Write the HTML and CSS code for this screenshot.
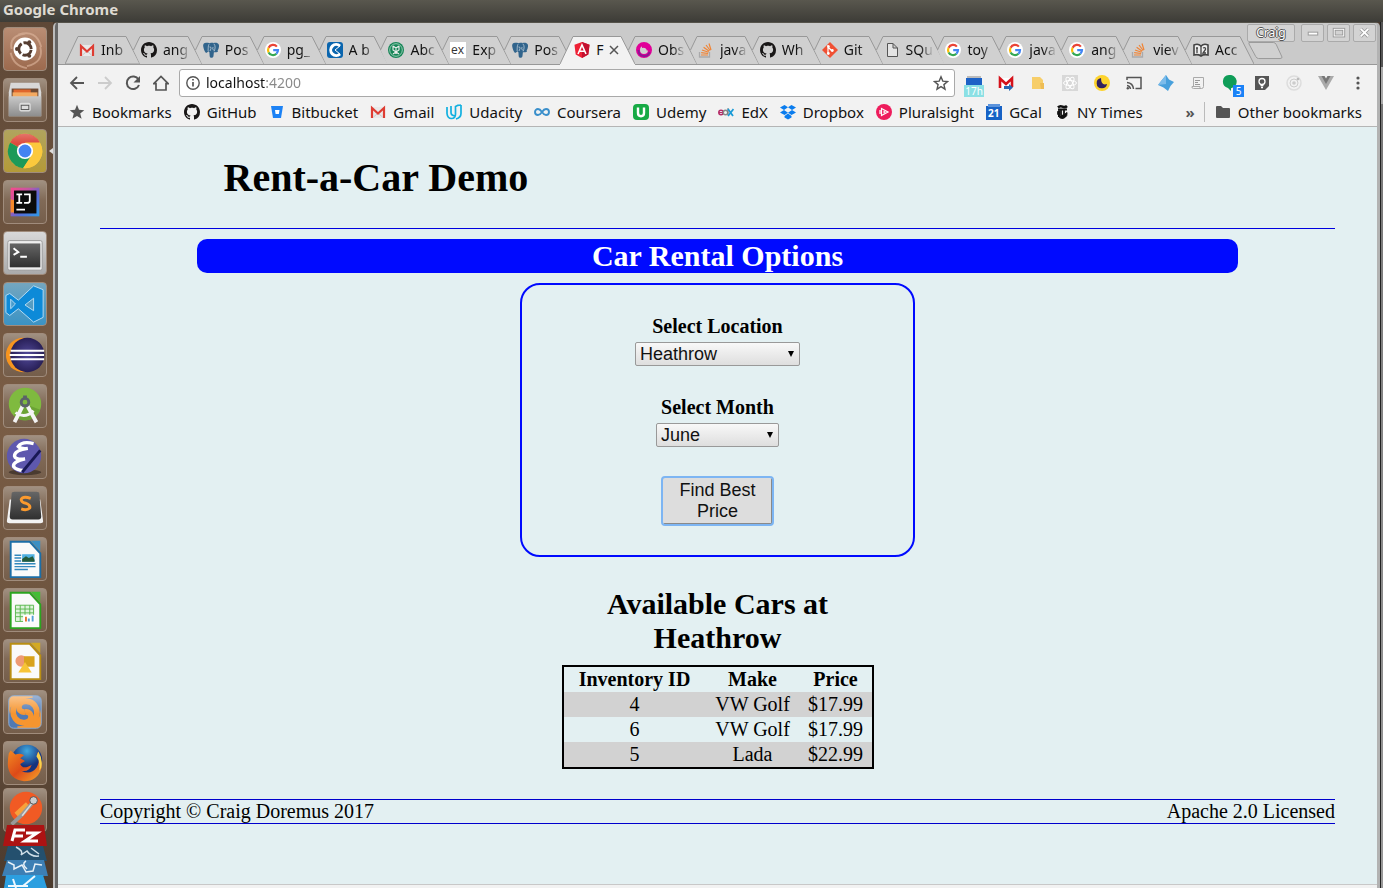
FILE: index.html
```html
<!DOCTYPE html>
<html lang="en">
<head>
<meta charset="utf-8">
<title>Rent-a-Car Demo</title>
<link rel="stylesheet" href="styles.css">
</head>
<body>
<svg class="defs" aria-hidden="true">
  <defs>
    <linearGradient id="gloss" x1="0" y1="0" x2="0" y2="1"><stop offset="0" stop-color="#fff" stop-opacity=".45"/><stop offset=".55" stop-color="#fff" stop-opacity="0"/></linearGradient>
    <linearGradient id="metal" x1="0" y1="0" x2="0" y2="1"><stop offset="0" stop-color="#c9c9c9"/><stop offset="1" stop-color="#8d8d8d"/></linearGradient>
    <linearGradient id="dark" x1="0" y1="0" x2="0" y2="1"><stop offset="0" stop-color="#666"/><stop offset="1" stop-color="#303030"/></linearGradient>
    <linearGradient id="rainbow" x1="0" y1="0" x2="1" y2="1"><stop offset="0" stop-color="#f94a8a"/><stop offset=".35" stop-color="#c255a5"/><stop offset=".6" stop-color="#5a6ad8"/><stop offset="1" stop-color="#2d9be8"/></linearGradient>
    <linearGradient id="fire" x1="0" y1="0" x2="1" y2="1"><stop offset="0" stop-color="#f28a22"/><stop offset=".5" stop-color="#dd4a18"/><stop offset="1" stop-color="#f7a72b"/></linearGradient>
    <radialGradient id="purple"><stop offset="0" stop-color="#524a9a"/><stop offset="1" stop-color="#281f56"/></radialGradient>
    <radialGradient id="globe" cx=".5" cy=".2"><stop offset="0" stop-color="#3fa9e0"/><stop offset="1" stop-color="#17337d"/></radialGradient>
    <clipPath id="rounded"><rect x="5" y="5" width="34" height="34" rx="5"/></clipPath>
  </defs>
  <symbol id="gmail" viewBox="0 0 16 16"><path d="M1 3h14v11H1z" fill="#e9e9e9"/><path d="M2 14V4l6 5.500L14 4v10" fill="none" stroke="#de3d33" stroke-width="2.200"/><path d="M3.500 13l3.500-3M12.500 13L9 10" stroke="#c9c9c9" fill="none"/></symbol>
  <symbol id="github" viewBox="0 0 16 16"><path fill="#191717" d="M8 0C3.580 0 0 3.580 0 8c0 3.540 2.290 6.530 5.470 7.590.4.07.55-.17.55-.38 0-.19-.01-.82-.01-1.490-2.010.37-2.530-.49-2.690-.94-.09-.23-.48-.94-.82-1.130-.28-.15-.68-.52-.01-.53.63-.01 1.080.58 1.230.82.72 1.210 1.870.87 2.330.66.07-.52.28-.87.51-1.070-1.780-.2-3.640-.89-3.640-3.950 0-.87.31-1.590.82-2.150-.08-.2-.36-1.020.08-2.120 0 0 .67-.21 2.200.82.64-.18 1.320-.27 2-.27s1.360.09 2 .27c1.530-1.040 2.200-.82 2.200-.82.44 1.100.16 1.920.08 2.120.51.56.82 1.270.82 2.150 0 3.070-1.870 3.750-3.650 3.950.29.25.54.73.54 1.480 0 1.070-.01 1.930-.01 2.200 0 .21.15.46.55.38A8 8 0 0 0 16 8c0-4.420-3.580-8-8-8z"/></symbol>
  <symbol id="postgres" viewBox="0 0 16 16"><path fill="#31648c" d="M3.500.7C.8.5-.1 2.300.2 4.300.7 7 1.500 9.700 2.800 10.700c1 .5 1.700-.6 2.600-1.400l1 .9.300 4c.3 1.900 3 2 3.700.3l.5-4.200 2.600-.1c1.300-.3 1.900-.8 1-1.200C16 6.500 16.500 3.500 15.500 2 14.300.5 12 .6 10.800 1 9.500.6 8 .6 6.800 1.200 5.600.8 4.500.7 3.500.7z"/><path d="M6 2.200C5 4 5.300 6 5.100 9M10.900 1.800c1.800 2.200 1.300 4.700.3 7.500M6.500 5q1.800-.5 1.500 1.500L7 9M10 5q-1 2 .8 3.500" fill="none" stroke="#cbd8e2" stroke-width=".7"/></symbol>
  <symbol id="google" viewBox="0 0 16 16"><circle cx="8" cy="8" r="8" fill="#fff"/><g fill="none" stroke-width="2.200"><path d="M11.900 4.600A5 5 0 0 0 3.600 5.700" stroke="#ea4335"/><path d="M3.600 5.700a5 5 0 0 0 0 4.700" stroke="#fbbc05"/><path d="M3.600 10.400a5 5 0 0 0 7.800 1.400" stroke="#34a853"/><path d="M11.400 11.800A5 5 0 0 0 13 8.100H8.200" stroke="#4285f4"/></g></symbol>
  <symbol id="overflow" viewBox="0 0 16 16"><path d="M1.500 10v5h10v-5" fill="none" stroke="#a9a9ab" stroke-width="1.300"/><path d="M3 13h7M3.200 10.700l6.900.8M4 8l6.500 2.300M5.600 5.300l5.600 4M8 3l4.200 5.500M11 1.500l2 6.500" stroke="#f08435" stroke-width="1.200"/></symbol>
  <symbol id="tab" viewBox="0 0 75 28"><path d="M6.500 14L13 .5H61L75 28H13z" fill="#d0d0d0"/><path d="M6.500 14L13 .5H61L75 28" fill="none" stroke="#989898"/></symbol>
  <symbol id="tab-first" viewBox="0 0 75 28"><path d="M0 28L13 .5H61L75 28z" fill="#d0d0d0" stroke="#989898"/></symbol>
  <symbol id="tab-active" viewBox="0 0 75 29"><path d="M0 28L13 .5H61L75 28v1H0z" fill="#f2f2f2"/><path d="M0 28L13 .5H61L75 28" fill="none" stroke="#989898"/></symbol>
</svg>

<header class="panel">Google Chrome</header>
<div class="desktop">
  <nav class="launcher" aria-label="Launcher">
    <button class="tile ubuntu" aria-label="Dash"><svg viewBox="0 0 44 44"><path d="M8 22Q5 8 22 6M38 20Q42 36 24 40M7 26Q10 40 24 42M15 7Q34 1 39 20" fill="none" stroke="#e0b79f" stroke-width="2" opacity=".6"/><circle cx="22" cy="22" r="12" fill="#fff"/><circle cx="22" cy="22" r="6.500" fill="none" stroke="#553d31" stroke-width="3" stroke-dasharray="11.600 2" stroke-dashoffset="-1"/><g fill="#553d31"><circle cx="13.500" cy="22" r="2"/><circle cx="26.500" cy="14.800" r="2"/><circle cx="26.500" cy="29.200" r="2"/></g></svg></button>
    <button class="tile" aria-label="Files"><svg viewBox="0 0 44 44"><path d="M7 4h30l2 10v25H5V14z" fill="#d8d8d8"/><path d="M8 10h28v10H8z" fill="#6e4a34"/><path d="M10 11h18v7H10z" fill="#e0662d"/><path d="M9 14h26v6H9z" fill="#f4a960"/><path d="M5 18h34v21H5z" fill="url(#metal)"/><rect x="16" y="25" width="12" height="9" rx="2" fill="#ddd"/><rect x="18" y="27.500" width="8" height="4.500" fill="#ddd" stroke="#555"/></svg></button>
    <button class="tile gold" aria-label="Chrome"><svg viewBox="0 0 44 44"><circle cx="22" cy="22" r="18" fill="#fbc93d"/><path d="M22 22L6.400 13A18 18 0 0 1 37.600 13z" fill="#dc4c3f"/><path d="M22 22L6.400 13A18 18 0 0 0 20 40l9-13z" fill="#1c9a59"/><path d="M22 13h15.600A18 18 0 0 1 20 40l9-14z" fill="#fbc93d"/><circle cx="22" cy="22" r="8.500" fill="#fff"/><circle cx="22" cy="22" r="6.700" fill="#4383f2"/><path d="M4 22a18 18 0 0 1 36 0z" fill="url(#gloss)" opacity=".5"/></svg><i class="mark"></i></button>
    <button class="tile" aria-label="IntelliJ"><svg viewBox="0 0 44 44"><path d="M7 7h30v30H7z" fill="url(#rainbow)"/><path d="M7 19l6 2v12H7z" fill="#f5892a"/><path d="M10.500 10h23.500v24H10.500z" fill="#0b0b0b"/><path d="M13 14h6M16 14v9M13 23h6M21 14h6v7q0 2-3 2h-3M13 30h9" fill="none" stroke="#fff" stroke-width="1.900"/></svg></button>
    <button class="tile silver" aria-label="Terminal"><svg viewBox="0 0 44 44"><rect x="4" y="9" width="36" height="31" rx="2" fill="#eee" stroke="#999"/><rect x="6" y="12" width="32" height="25" fill="url(#dark)"/><path d="M10 17l5 4-5 3M17 26h7" fill="none" stroke="#fff" stroke-width="2"/></svg></button>
    <button class="tile blue" aria-label="Visual Studio Code"><svg viewBox="0 0 44 44"><path d="M31 3l10 4v29l-10 5-16-14-9 7-4-3V13l4-2 9 7zm0 13l-9 7 9 6z" fill="#0d8ad8" stroke="#b8ddf4"/><path d="M7 17v10l5-5z" fill="#4a9ccc" stroke="#b8ddf4"/></svg></button>
    <button class="tile" aria-label="Eclipse"><svg viewBox="0 0 44 44"><circle cx="20" cy="22" r="18" fill="#f7941e"/><circle cx="24.500" cy="22" r="18" fill="url(#purple)"/><path d="M7 17.500h35M6 22h36M7 26.500h35" stroke="#fff" stroke-width="2.200"/></svg></button>
    <button class="tile" aria-label="Android Studio"><svg viewBox="0 0 44 44"><circle cx="22" cy="20" r="17" fill="#7fba3f"/><path d="M22 20L10 32a17 17 0 0 0 28-6z" fill="#6ba334"/><path d="M20 21L11 39M24 21l10 18" stroke="#f4f4f4" stroke-width="4"/><path d="M12 29q10 7 19-2" fill="none" stroke="#f4f4f4" stroke-width="3"/><circle cx="22" cy="18" r="4" fill="none" stroke="#5b6268" stroke-width="3"/><path d="M22 11v4" stroke="#5b6268" stroke-width="4"/></svg></button>
    <button class="tile" aria-label="Emacs"><svg viewBox="0 0 44 44"><ellipse cx="22" cy="38" rx="17" ry="3" fill="#4a3b30"/><circle cx="21" cy="21" r="18" fill="#5e58ae"/><path d="M31 8q-12-3-16 3 3 3 10 2-14 2-14 8 1 4 11 3-13 3-12 8 3 4 10 4" fill="none" stroke="#fff" stroke-width="3.500"/><path d="M38 15L19 38" stroke="#191955" stroke-width="3"/></svg></button>
    <button class="tile" aria-label="Sublime Text"><svg viewBox="0 0 44 44"><path d="M6 13L3 36q0 2 3 2h32q3 0 3-2l-3-23z" fill="#f3f3f3"/><path d="M8 7q0-2 3-2h23q3 0 3 2l2 24q0 3-3 3H9q-3 0-3-3z" fill="url(#dark)"/><path d="M28 12q-8-3-10 1 0 3 5 4 5 2 4 5-3 3-9 1" fill="none" stroke="#fb9a2e" stroke-width="3"/></svg></button>
    <button class="tile" aria-label="Writer"><svg viewBox="0 0 44 44"><path d="M7 4h20l11 12v25H7z" fill="#fafafa" stroke="#1c6ea7" stroke-width="2"/><path d="M28 3h10v11z" fill="#3c8fc3"/><path d="M11 18h7M11 21h7M11 24h7M11 27h22M11 30h22M11 33h14" stroke="#3288bd" stroke-width="1.500"/><path d="M19 17h13v8H19z" fill="#4fb0e2"/><path d="M19 25v-3l4-3 3 2 4-2 2 4v2z" fill="#255b3b"/></svg></button>
    <button class="tile" aria-label="Calc"><svg viewBox="0 0 44 44"><path d="M7 4h20l11 12v25H7z" fill="#fafafa" stroke="#2ba41f" stroke-width="2"/><path d="M28 3h10v11z" fill="#43bd35"/><path d="M12 17h19v17H12zM12 21h19M12 25h19M12 29h19M17 17v17M22 17v17M27 17v17" fill="#dff3dc" stroke="#5ab850"/><path d="M20 27h13v8H20z" fill="#fff"/><path d="M23 29v5" stroke="#e6732e" stroke-width="2"/><path d="M26 31v3M30 28v6" stroke="#559fd3" stroke-width="2"/></svg></button>
    <button class="tile" aria-label="Draw"><svg viewBox="0 0 44 44"><path d="M7 4h20l11 12v25H7z" fill="#fafafa" stroke="#b98e13" stroke-width="2"/><path d="M28 3h10v11z" fill="#d3aa24"/><circle cx="18" cy="22" r="6" fill="#ee9a74"/><path d="M21 17h11v11H21z" fill="#d9a21c"/><path d="M22 23l7 11H15z" fill="#f7c437"/></svg></button>
    <button class="tile" aria-label="Swirl"><svg viewBox="0 0 44 44"><g clip-path="url(#rounded)"><path d="M5 5h34v34H5z" fill="#5079b3"/><g fill="none" stroke="#f6952f" stroke-width="6"><path d="M22 22C14 23 13 12 22 11c9-1 14 7 12 15-2 9-10 14-20 14"/><path d="M22 22c8-1 9 10 0 11C13 34 8 26 10 18 12 9 20 4 30 4"/></g><path d="M5 5h12L7 17l-2 9zM39 39H27l10-12 2-9z" fill="#f6952f"/></g><rect x="5" y="5" width="34" height="34" rx="5" fill="url(#gloss)" stroke="#8fb0d8"/></svg></button>
    <button class="tile" aria-label="Firefox"><svg viewBox="0 0 44 44"><circle cx="24" cy="19" r="16" fill="url(#globe)"/><path d="M5 12l2-3 5 4q6-2 9 1l-4 3 5 3-5 3q2 5 8 3l4-2q-3 8-11 6 10 5 16-3 5-8 0-17 7 8 5 18-4 13-18 13Q5 39 4 24q0-7 1-12z" fill="url(#fire)"/><path d="M36 10q5 8 3 17l-2 3q1-10-3-15z" fill="#f9d24b"/></svg></button>
    <button class="tile short" aria-label="Postman"><svg viewBox="0 0 44 44"><circle cx="23" cy="20" r="17" fill="#f15a24"/><path d="M13 27l12-11" stroke="#f7a13b" stroke-width="6"/><path d="M31 13L19 27 8 37" fill="none" stroke="#999" stroke-width="4"/><path d="M30 14L19 28" stroke="#ddd" stroke-width="1.500"/><circle cx="31" cy="12" r="4" fill="#ccc" stroke="#555"/></svg></button>
    <svg class="pile" viewBox="0 0 53 63"><path d="M7 0h37l3 21H3z" fill="#ac1313"/><path d="M12 16l3-11h10M14 11h9M26 8h11L25 16h13" fill="none" stroke="#fff" stroke-width="3"/><path d="M8 21h35l4 15H4z" fill="#24506e"/><path d="M16 22q8 4 5 8l6-4q4 6 12 5M31 23l8 6" fill="none" stroke="#cfdfe8" stroke-width="1.500"/><path d="M7 35h37l4 16H2z" fill="#3d7fb4"/><path d="M8 37l6 3v4l8-4 4 7 7-1 2-7 7 1M26 36q-5 3 1 8" fill="none" stroke="#e7f0f7" stroke-width="1.500"/><path d="M6 50h37l4 13H4z" fill="#2c9fe0"/><path d="M13 54l3 9M35 51L23 61M8 61h20" fill="none" stroke="#eef8ff" stroke-width="2"/></svg>
  </nav>

  <div class="window">
    <div class="strip">
      <div class="tabs" role="tablist">
        <div class="tab" role="tab"><svg class="shape"><use href="#tab-first"/></svg><svg class="icon"><use href="#gmail"/></svg><span>Inb</span></div>
        <div class="tab" role="tab"><svg class="shape"><use href="#tab"/></svg><svg class="icon"><use href="#github"/></svg><span>ang</span></div>
        <div class="tab" role="tab"><svg class="shape"><use href="#tab"/></svg><svg class="icon"><use href="#postgres"/></svg><span>Pos</span></div>
        <div class="tab" role="tab"><svg class="shape"><use href="#tab"/></svg><svg class="icon"><use href="#google"/></svg><span>pg_</span></div>
        <div class="tab" role="tab"><svg class="shape"><use href="#tab"/></svg><svg class="icon" viewBox="0 0 16 16"><rect width="16" height="16" rx="3" fill="#0a65ae"/><path d="M13 4A5.500 5.500 0 1 0 13 12" fill="none" stroke="#fff" stroke-width="3"/><path d="M13 4L8 8l5 4" fill="#0a65ae" stroke="#fff" stroke-width="1"/></svg><span>A b</span></div>
        <div class="tab" role="tab"><svg class="shape"><use href="#tab"/></svg><svg class="icon" viewBox="0 0 16 16"><circle cx="8" cy="8" r="8" fill="#158556"/><circle cx="8" cy="8" r="6.300" fill="none" stroke="#cfe6db" stroke-width=".7"/><path d="M5 4l3 2 3-2M5 4v4l6 4M11 4v4l-6 4M8 6v6" fill="none" stroke="#eee" stroke-width="1.100"/></svg><span>Abc</span></div>
        <div class="tab" role="tab"><svg class="shape"><use href="#tab"/></svg><svg class="icon" viewBox="0 0 16 16"><path d="M0 0h16v16H0z" fill="#fff"/><text x="1" y="12" class="ex">ex</text></svg><span>Exp</span></div>
        <div class="tab" role="tab"><svg class="shape"><use href="#tab"/></svg><svg class="icon"><use href="#postgres"/></svg><span>Pos</span></div>
        <div class="tab active" role="tab" aria-selected="true"><svg class="shape"><use href="#tab-active"/></svg><svg class="icon" viewBox="0 0 16 16"><path d="M8 0l7.500 2.700-1.200 9.800L8 16l-6.300-3.500L.5 2.700z" fill="#ee2035"/><path d="M8 0v16l6.300-3.500 1.200-9.800z" fill="#c3102f"/><path d="M4 12l4-9 4 9M5.600 9.300h4.800" fill="none" stroke="#fff" stroke-width="1.600"/></svg><span>F</span><button class="close" aria-label="Close tab"><svg viewBox="0 0 10 10"><path d="M1 1l8 8M9 1L1 9" stroke="#555" stroke-width="1.500"/></svg></button></div>
        <div class="tab" role="tab"><svg class="shape"><use href="#tab"/></svg><svg class="icon" viewBox="0 0 16 16"><circle cx="8" cy="8" r="6" fill="#d0d0d0" stroke="#e10098" stroke-width="4"/><path d="M2.500 8q0 6 6 6 4 0 5-4" fill="none" stroke="#8b1792" stroke-width="2"/><path d="M6 3q6-1 7 4l-2 2q-1-4-5-3z" fill="#e10098"/></svg><span>Obs</span></div>
        <div class="tab" role="tab"><svg class="shape"><use href="#tab"/></svg><svg class="icon"><use href="#overflow"/></svg><span>java</span></div>
        <div class="tab" role="tab"><svg class="shape"><use href="#tab"/></svg><svg class="icon"><use href="#github"/></svg><span>Wh</span></div>
        <div class="tab" role="tab"><svg class="shape"><use href="#tab"/></svg><svg class="icon" viewBox="0 0 16 16"><path d="M8 0l8 8-8 8-8-8z" fill="#f05033"/><path d="M6 3v9M6 5l4 4" stroke="#fff" fill="none" stroke-width="1.200"/><g fill="#fff"><circle cx="6.500" cy="4.500" r="1.300"/><circle cx="6.300" cy="11.500" r="1.400"/><circle cx="10.300" cy="8.500" r="1.400"/></g></svg><span>Git</span></div>
        <div class="tab" role="tab"><svg class="shape"><use href="#tab"/></svg><svg class="icon" viewBox="0 0 16 16"><path d="M3.500 1.500H9L13.500 6v8.500h-10zM9 1.500V6h4.500" fill="#e4e4e4" stroke="#555"/></svg><span>SQu</span></div>
        <div class="tab" role="tab"><svg class="shape"><use href="#tab"/></svg><svg class="icon"><use href="#google"/></svg><span>toy</span></div>
        <div class="tab" role="tab"><svg class="shape"><use href="#tab"/></svg><svg class="icon"><use href="#google"/></svg><span>java</span></div>
        <div class="tab" role="tab"><svg class="shape"><use href="#tab"/></svg><svg class="icon"><use href="#google"/></svg><span>ang</span></div>
        <div class="tab" role="tab"><svg class="shape"><use href="#tab"/></svg><svg class="icon"><use href="#overflow"/></svg><span>viev</span></div>
        <div class="tab" role="tab"><svg class="shape"><use href="#tab"/></svg><svg class="icon" viewBox="0 0 16 16"><path d="M1 3q4-2 7 1 3-3 7-1v10q-4-1-7 1-3-2-7-1z" fill="#eee" stroke="#444" stroke-width="1.600"/><path d="M8 4v10M4 6v5M3 6h2M10 6q3-1 2.500 1.500L10 11h3" fill="none" stroke="#444" stroke-width="1.300"/></svg><span>Acc</span></div>
      </div>
      <div class="corner">
        <div class="controls">
          <button class="user">Craig</button>
          <button aria-label="Minimize"><svg viewBox="0 0 22 16"><rect x="6.500" y="7.500" width="10" height="3" fill="#fff" stroke="#999"/></svg></button>
          <button aria-label="Maximize"><svg viewBox="0 0 22 16"><rect x="6.500" y="4.500" width="10" height="7" fill="none" stroke="#999" stroke-width="3"/><rect x="6.500" y="4.500" width="10" height="7" fill="none" stroke="#fff"/></svg></button>
          <button aria-label="Close"><svg viewBox="0 0 22 16"><path d="M7 4l8 8M15 4l-8 8" stroke="#999" stroke-width="3.500"/><path d="M7 4l8 8M15 4l-8 8" stroke="#fff" stroke-width="2"/></svg></button>
        </div>
        <button class="newtab" aria-label="New tab"><svg viewBox="0 0 36 18"><path d="M1 .5h25q2 0 3 2l6 13q0 1.500-2 1.500H11q-2 0-3-2L1 2z" fill="#d0d0d0" stroke="#999"/></svg></button>
      </div>
    </div>

    <div class="toolbar">
      <button class="nav" aria-label="Back"><svg viewBox="0 0 16 16"><path d="M15 8H2M8 2L2 8l6 6" fill="none" stroke="#555" stroke-width="1.800"/></svg></button>
      <button class="nav" aria-label="Forward"><svg viewBox="0 0 16 16"><path d="M1 8h13M8 2l6 6-6 6" fill="none" stroke="#ccc" stroke-width="1.800"/></svg></button>
      <button class="nav" aria-label="Reload"><svg viewBox="0 0 16 16"><path d="M13.500 4.500A6.300 6.300 0 1 0 14 10" fill="none" stroke="#555" stroke-width="2"/><path d="M15 1v6.500H8.500z" fill="#555"/></svg></button>
      <button class="nav" aria-label="Home"><svg viewBox="0 0 16 16"><path d="M.8 8.700L8 1.500l7.200 7.200H13V15H3V8.700z" fill="none" stroke="#555" stroke-width="1.700"/></svg></button>
      <div class="omnibox">
        <svg class="icon" viewBox="0 0 16 16"><circle cx="8" cy="8" r="6.200" fill="none" stroke="#555" stroke-width="1.400"/><path d="M8 7v4.500M8 4v1.600" stroke="#555" stroke-width="1.700"/></svg>
        <input type="text" value="localhost:4200" aria-label="Address">
        <button class="nav" aria-label="Bookmark this page"><svg viewBox="0 0 16 16"><path d="M8 1.800l1.800 4.300 4.700.4-3.600 3.100 1.100 4.600L8 11.700l-4 2.500 1.100-4.600L1.500 6.500l4.700-.4z" fill="none" stroke="#555" stroke-width="1.400"/></svg></button>
      </div>
      <div class="extensions">
        <button aria-label="Calendar"><svg viewBox="0 0 20 16"><path d="M3 1h14v2H3z" fill="#bbb"/><path d="M2 3h16v9H2z" fill="#1d62c6"/></svg><b class="badge hours">17h</b></button>
        <button aria-label="Mail checker"><svg viewBox="0 0 16 16"><path d="M1 3h14v10H1z" fill="#fff"/><path d="M2 13V3.500L8 9l6-5.500V12" fill="none" stroke="#d5121b" stroke-width="2.600"/><path d="M6 11h5V9l4 3.500-4 3.500v-2H6z" fill="#2867b2"/></svg></button>
        <button aria-label="Notes"><svg viewBox="0 0 16 16"><path d="M2 2h8l3 3v9H2z" fill="#f7ce69"/><path d="M10 8h4v6h-3z" fill="#eebd55"/></svg></button>
        <button aria-label="React"><svg viewBox="0 0 16 16"><path d="M0 0h16v16H0z" fill="#d8d8d8"/><g fill="none" stroke="#fff"><ellipse cx="8" cy="8" rx="6.500" ry="2.500"/><ellipse cx="8" cy="8" rx="6.500" ry="2.500" transform="rotate(60 8 8)"/><ellipse cx="8" cy="8" rx="6.500" ry="2.500" transform="rotate(120 8 8)"/></g></svg></button>
        <button aria-label="Moon"><svg viewBox="0 0 16 16"><circle cx="8" cy="8" r="8" fill="#fdd32c"/><path d="M7 3a5.200 5.200 0 1 0 6 6q-6 2-6-6z" fill="#33215f"/></svg></button>
        <button aria-label="Cast"><svg viewBox="0 0 16 16"><path d="M1 5V2.500h14v11H9.500M1 7.500q6 .5 6.500 6.500M1 10.500q3 .3 3.500 3.500" fill="none" stroke="#555" stroke-width="1.500"/><circle cx="1.800" cy="13.300" r="1.200" fill="#555"/></svg></button>
        <button aria-label="Star"><svg viewBox="0 0 16 16"><path d="M8 0l3 4.500 5 2.500-3.500 4L10 16l-4.500-3.500L0 10l3.500-4.500z" fill="#48a0dc"/><path d="M8 0v9l-8 1 3.500-4.500z" fill="#7cbceb"/></svg></button>
        <button aria-label="Scripts"><svg viewBox="0 0 16 16"><path d="M3.500 2.500h10v9q0 2-2 2h-8q-2 0-1.500-2h8v2M3.500 2.500v9" fill="none" stroke="#aaa"/><path d="M5 5.500h5M5 7.500h3M5 9.500h5" stroke="#999"/></svg></button>
        <button aria-label="Hangouts"><svg viewBox="0 0 16 16"><path d="M7 0a6.600 6.600 0 0 1 2 13.200V16l-3-3A6.600 6.600 0 0 1 7 0z" fill="#0f9d58"/></svg><b class="badge count">5</b></button>
        <button aria-label="Ideas"><svg viewBox="0 0 16 16"><path d="M1 1h14v10l-4 4H1z" fill="#555"/><circle cx="8" cy="6.500" r="3" fill="none" stroke="#fff" stroke-width="1.300"/><path d="M6.500 10.500h3M7 12.500h2" stroke="#fff" stroke-width="1.500"/></svg></button>
        <button aria-label="Orbit"><svg viewBox="0 0 16 16"><circle cx="8" cy="8" r="7" fill="none" stroke="#ddd" stroke-width="1.500"/><circle cx="8" cy="8" r="4" fill="none" stroke="#ccc"/><circle cx="8" cy="8" r="1.800" fill="#ccc"/><circle cx="12" cy="4" r="1.300" fill="#bbb"/></svg></button>
        <button aria-label="Vue"><svg viewBox="0 0 16 16"><path d="M0 1h6l2 4 2-4h6L8 15z" fill="#aaa"/><path d="M3.500 1h3L8 3.500 9.500 1h3L8 9z" fill="#777"/></svg></button>
        <button aria-label="Menu"><svg viewBox="0 0 16 16"><g fill="#555"><circle cx="8" cy="3" r="1.600"/><circle cx="8" cy="8" r="1.600"/><circle cx="8" cy="13" r="1.600"/></g></svg></button>
      </div>
    </div>

    <nav class="bookmarks" aria-label="Bookmarks">
      <a href="#"><svg class="icon" viewBox="0 0 16 16"><path d="M8 .8l2 5 5.300.4-4.100 3.400 1.400 5.200L8 12l-4.600 2.800 1.400-5.200L.7 6.200 6 5.800z" fill="#555"/></svg>Bookmarks</a>
      <a href="#"><svg class="icon"><use href="#github"/></svg>GitHub</a>
      <a href="#"><svg class="icon" viewBox="0 0 16 16"><path d="M2 2h12l-2 12H4z" fill="#1c82f5"/><path d="M6 6h4.500l-.6 4H6.600z" fill="#fff"/></svg>Bitbucket</a>
      <a href="#"><svg class="icon"><use href="#gmail"/></svg>Gmail</a>
      <a href="#"><svg class="icon" viewBox="0 0 16 16"><path d="M1 3v6.500q.5 5 4.500 5t4-4.500V2.500l3-1.500M15 1v8.500q0 4-5 5.500M5 2v6.500q0 3 4 3.500M11.500 1.500L15 1" fill="none" stroke="#12b0e0" stroke-width="1.700"/></svg>Udacity</a>
      <a href="#"><svg class="icon" viewBox="0 0 16 16"><path d="M8 8Q6 5 4 5a3 3 0 0 0 0 6q2 0 4-3t4-3a3 3 0 0 1 0 6q-2 0-4-3z" fill="none" stroke="#3a8fcb" stroke-width="1.900"/></svg>Coursera</a>
      <a href="#"><svg class="icon" viewBox="0 0 16 16"><rect width="16" height="16" rx="4" fill="#17aa45"/><path d="M5 3.500V9q0 3.200 3 3.200T11 9V3.500" fill="none" stroke="#fff" stroke-width="2.400"/></svg>Udemy</a>
      <a href="#"><svg class="icon" viewBox="0 0 16 16"><circle cx="3" cy="8.500" r="2.200" fill="none" stroke="#b52a67" stroke-width="1.500"/><path d="M1 8.500h4" stroke="#b52a67"/><circle cx="7.500" cy="8.500" r="2.200" fill="none" stroke="#888" stroke-width="1.400"/><path d="M10 4v7" stroke="#777"/><path d="M10 5l5 7M15.500 5L10 12" stroke="#1a9bd7" stroke-width="1.800"/></svg>EdX</a>
      <a href="#"><svg class="icon" viewBox="0 0 16 16"><path d="M4.500 1L8 3.300 4 6 0 3.600zM11.500 1L16 3.600 12 6 8 3.300zM0 8.500L4 6l4 2.700L4.500 11zM12 6l4 2.500-4.500 2.500L8 8.700zM8 9.600l3.500 2.400v1.400L8 15.500l-3.500-2.100V12z" fill="#0a7cee"/></svg>Dropbox</a>
      <a href="#"><svg class="icon" viewBox="0 0 16 16"><circle cx="8" cy="8" r="8" fill="#ee1c5c"/><path d="M5.500 4.500L12 8l-6.500 3.500zM4 6v4" fill="none" stroke="#fff" stroke-width="1.200"/><path d="M7.500 6.500L10 8 7.500 9.500z" fill="#fff"/></svg>Pluralsight</a>
      <a href="#"><svg class="icon" viewBox="0 0 16 16"><path d="M0 2h16v14H0z" fill="#1762c5"/><path d="M2 0h12v3H2z" fill="#5b93dc"/><text x="2" y="13" class="day">21</text></svg>GCal</a>
      <a href="#"><svg class="icon" viewBox="0 0 16 16"><path d="M4 3.500q2-2 4.500-.8T13 2" fill="none" stroke="#111" stroke-width="2.600"/><path d="M4 5.500h9M7 5.500v6M10 5v8" fill="none" stroke="#111" stroke-width="1.800"/><path d="M3.500 8.500q0-2 2-2v6q-2-1-2-4zM4 12q3 4 7 1.500 2.500-1.500 2-5l-2 1.500" fill="#111" stroke="#111"/></svg>NY Times</a>
      <button class="more" aria-label="More bookmarks">»</button>
      <a href="#" class="other"><svg class="icon" viewBox="0 0 16 16"><path d="M1 3q0-1 1-1h4l2 2h6q1 0 1 1v8q0 1-1 1H2q-1 0-1-1z" fill="#555"/></svg>Other bookmarks</a>
    </nav>

    <main class="page">
      <h1>Rent-a-Car Demo</h1>
      <section class="content">
        <h2 class="banner">Car Rental Options</h2>
        <form class="options">
          <label for="location">Select Location</label>
          <span class="select wide"><select id="location"><option>Heathrow</option></select></span>
          <label for="month">Select Month</label>
          <span class="select"><select id="month"><option>June</option></select></span>
          <button type="button" class="find">Find Best Price</button>
        </form>
        <section class="cars">
          <h2>Available Cars at Heathrow</h2>
          <table>
            <thead><tr><th class="id">Inventory ID</th><th class="make">Make</th><th>Price</th></tr></thead>
            <tbody>
              <tr><td>4</td><td>VW Golf</td><td>$17.99</td></tr>
              <tr><td>6</td><td>VW Golf</td><td>$17.99</td></tr>
              <tr><td>5</td><td>Lada</td><td>$22.99</td></tr>
            </tbody>
          </table>
        </section>
      </section>
      <footer><span>Copyright © Craig Doremus 2017</span><span>Apache 2.0 Licensed</span></footer>
    </main>
  </div>
  <div class="behind"></div>
</div>
</body>
</html>
```
FILE: styles.css
```css
* { box-sizing: border-box; }

body {
  margin: 0;
  height: 100vh;
  display: flex;
  flex-direction: column;
  overflow: hidden;
  background: #4a3a2e;
  color: #111;
  font: 14px/20px "Noto Sans", sans-serif;
}

button {
  margin: 0;
  padding: 0;
  border: 0;
  background: none;
  font: inherit;
  color: inherit;
}

svg { display: block; }
.defs { position: absolute; width: 0; height: 0; }
.icon { flex: none; width: 16px; height: 16px; }

.panel {
  flex: none;
  height: 22px;
  padding-left: 3px;
  background: linear-gradient(#59574e, #3d3c37);
  color: #dfdbd2;
  font-size: 15px;
  font-weight: bold;
  line-height: 18px;
}

.desktop { flex: 1; min-height: 0; display: flex; }

/* launcher */
.launcher {
  position: relative;
  flex: none;
  width: 53px;
  padding: 5px 0 0 3px;
  display: flex;
  flex-direction: column;
  gap: 7px;
  overflow: hidden;
  background: linear-gradient(#5e4837, #7a5d45 45%, #6d543f 70%, #4b3a2d);
}
.tile {
  position: relative;
  flex: none;
  width: 44px;
  height: 44px;
  border: 1px solid #a08c7c;
  border-radius: 4px;
  background: linear-gradient(#a09081, #816a57 45%, #755e4b);
}
.tile > svg { width: 42px; height: 42px; }
.ubuntu { background: linear-gradient(#b98d74, #9c6a4e); }
.gold { background: linear-gradient(#b0a45e, #b49a38); }
.silver { background: linear-gradient(#d8d8d8, #aaa); }
.blue { background: linear-gradient(#74a6bf, #3b93c4); }
.short { margin-top: -4px; }
.mark {
  position: absolute;
  right: -7px;
  top: 18px;
  border: 3px solid transparent;
  border-left: 0;
  border-right: 4px solid #ddd;
}
.launcher .pile {
  position: absolute;
  left: 0;
  bottom: 0;
  width: 53px;
  height: 63px;
}

/* browser window */
.window {
  flex: 1;
  min-width: 0;
  display: flex;
  flex-direction: column;
  border: solid #a6a6a6;
  border-width: 1px 3px 0 5px;
  border-left: 5px ridge #bbb;
  border-right-color: #b2b2b2;
  border-top-color: #55534b;
  border-radius: 5px 5px 0 0;
  background: #cacaca;
}
.behind {
  flex: none;
  width: 3px;
  border-left: 1px solid #222;
  background: linear-gradient(#555 45px, #aaa 45px, #aaa 82px, #777 82px, #999);
}

.strip {
  flex: none;
  display: flex;
  height: 42px;
  border-bottom: 1px solid #989898;
}
.tabs {
  flex: 1;
  min-width: 0;
  display: flex;
  align-items: flex-end;
  padding-left: 7px;
}
.tab {
  position: relative;
  flex: 1 1 0;
  min-width: 0;
  display: flex;
  align-items: center;
  gap: 6px;
  height: 28px;
  padding-left: 14px;
}
.shape {
  position: absolute;
  left: 0;
  top: 0;
  width: 75px;
  height: 28px;
  overflow: visible;
}
.active .shape { height: 29px; }
.tab .icon, .tab span, .close { position: relative; }
.tab span {
  white-space: nowrap;
  mask-image: linear-gradient(90deg, #000 14px, transparent 28px);
}
.tab.active { z-index: 2; }
.tab.active span { mask-image: none; }
.close { width: 10px; height: 10px; flex: none; }
.ex { font: 12px "Open Sans", sans-serif; fill: #333; }

.corner { flex: none; width: 136px; }
.controls {
  display: flex;
  justify-content: flex-end;
  gap: 3px;
  padding: 1px 1px 0 0;
}
.controls button {
  width: 23px;
  height: 18px;
  border: 1px solid #aaa;
  border-radius: 2px;
  background: #d3d3d3;
}
.controls .user {
  width: 48px;
  margin-right: 3px;
  font-size: 12px;
  line-height: 16px;
  color: #fff;
  text-shadow: 1px 0 #555, -1px 0 #555, 0 1px #555, 0 -1px #555;
}
.newtab { display: block; width: 35px; height: 18px; margin-left: 7px; }

.toolbar {
  flex: none;
  display: flex;
  align-items: center;
  gap: 12px;
  height: 36px;
  padding: 0 3px 0 11px;
  background: #f2f2f2;
}
.nav { flex: none; width: 16px; height: 16px; }
.omnibox {
  flex: 1;
  min-width: 0;
  display: flex;
  align-items: center;
  gap: 5px;
  height: 28px;
  margin: 0 -9px 0 -2px;
  padding: 0 5px;
  border: 1px solid #a9a9a9;
  border-radius: 3px;
  background: #fff;
}
.omnibox input {
  flex: 1;
  min-width: 0;
  padding: 0;
  border: 0;
  outline: 0;
  font: inherit;
  color: transparent;
  background: linear-gradient(90deg, #111 59px, #888 59px);
  background-clip: text;
}
.extensions { flex: none; display: flex; }
.extensions button {
  position: relative;
  width: 32px;
  height: 20px;
  padding: 2px 0;
}
.extensions svg { height: 16px; margin: 0 auto; }
.badge {
  position: absolute;
  color: #fff;
  font: 10px/12px "Noto Sans", sans-serif;
}
.hours { left: 6px; top: 12px; width: 20px; background: #8be0e4; }
.count { right: 2px; top: 12px; width: 11px; background: #1a82f7; }

.bookmarks {
  flex: none;
  display: flex;
  align-items: center;
  gap: 12px;
  height: 26px;
  padding: 0 15px 3px 11px;
  border-bottom: 1px solid #b5b5b5;
  background: #f2f2f2;
  font-size: 15px;
  white-space: nowrap;
}
.bookmarks a {
  display: flex;
  align-items: center;
  gap: 7px;
  color: inherit;
  text-decoration: none;
}
.more { margin-left: auto; color: #555; font-weight: bold; }
.bookmarks .other { padding-left: 10px; border-left: 1px solid #bbb; margin-left: -3px; }
.day { font: bold 10px "Noto Sans", sans-serif; fill: #fff; }

/* rental page */
.page {
  flex: 1;
  min-height: 0;
  margin-bottom: 3px;
  padding: 28px 42px 0;
  overflow: hidden;
  border-bottom: 1px solid #c8c8c8;
  box-shadow: 0 3px #f2f2f2;
  background: #e3f0f2;
  color: #000;
  font: 20px/23px "Liberation Serif", serif;
}
h1, h2 { margin: 0; }
h1 {
  padding: 0 0 27px 10%;
  border-bottom: 1px solid #0000e0;
  font-size: 40px;
  line-height: 46px;
}
h2 { font-size: 30px; line-height: 34px; text-align: center; }
.content {
  display: flex;
  flex-direction: column;
  align-items: center;
  padding: 10px 97px 30px;
}
.banner {
  align-self: stretch;
  margin-bottom: 10px;
  border-radius: 10px;
  background: #000aff;
  color: #fff;
}
.options {
  display: flex;
  flex-direction: column;
  align-items: center;
  width: 38%;
  padding: 30px 0;
  border: 2px solid #000aff;
  border-radius: 20px;
}
.options label { margin-bottom: 5px; font-weight: bold; line-height: 22px; }
.select { position: relative; width: 123px; margin-bottom: 30px; }
.select.wide { width: 165px; }
.select select {
  display: block;
  width: 100%;
  height: 24px;
  padding: 0 4px;
  appearance: none;
  border: 1px solid #999;
  border-radius: 2px;
  background: linear-gradient(#f8f8f8, #dedede);
  color: #111;
  font: 18px "Liberation Sans", sans-serif;
}
.select::after {
  content: "";
  position: absolute;
  right: 6px;
  top: 9px;
  border: 3px solid transparent;
  border-top: 6px solid #000;
  border-bottom: 0;
  pointer-events: none;
}
.find {
  width: 111px;
  height: 48px;
  padding: 0 6px;
  border: 2px outset #ddd;
  border-radius: 3px;
  outline: 2px solid #7db5f3;
  outline-offset: -1px;
  background: #ddd;
  color: #111;
  font: 18px/21px "Liberation Sans", sans-serif;
}
.cars { width: 312px; margin-top: 30px; }
.cars h2 { padding: 0 30px; margin-bottom: 10px; }
table {
  width: 100%;
  border: 2px solid #000;
  border-spacing: 0;
  table-layout: fixed;
  text-align: center;
}
th, td { padding: 1px 0; }
.id { width: 142px; }
.make { width: 94px; }
tbody tr:nth-child(odd) { background: #d2d2d2; }
footer {
  display: flex;
  justify-content: space-between;
  border: 1px solid #0000cd;
  border-width: 1px 0;
}
```
